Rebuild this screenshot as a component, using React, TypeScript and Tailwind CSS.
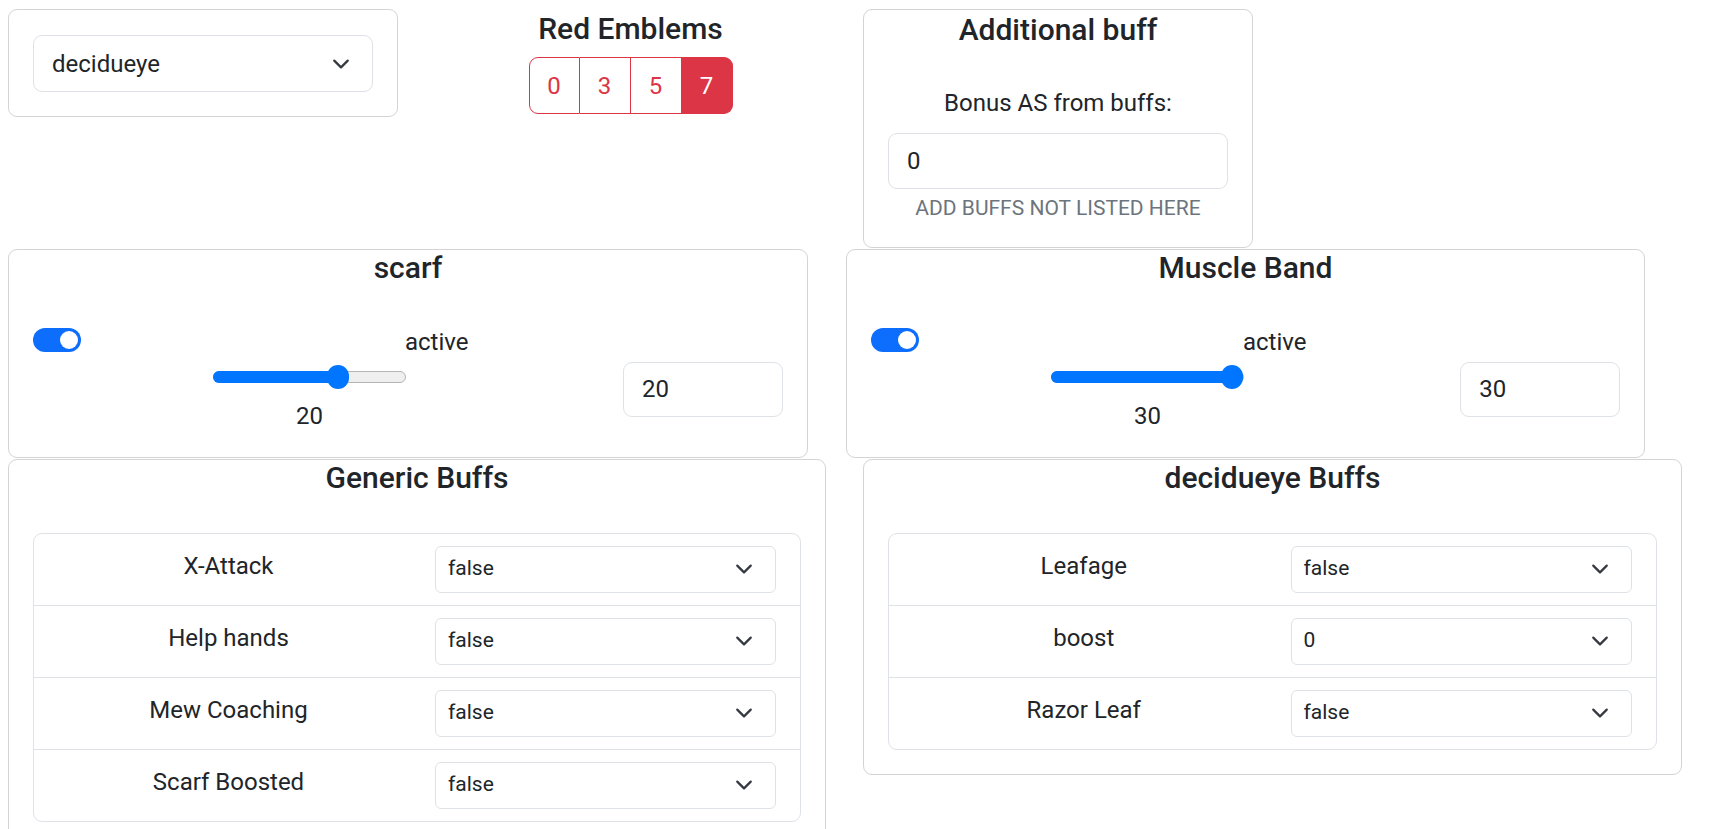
import { useState } from 'react';

type ItemCardProps = {
  title: string;
  value: number;
  max: number;
  widthClass: string;
  marginClass: string;
};

type BuffRow = {
  label: string;
  value: string;
};

const genericBuffs: BuffRow[] = [
  { label: 'X-Attack', value: 'false' },
  { label: 'Help hands', value: 'false' },
  { label: 'Mew Coaching', value: 'false' },
  { label: 'Scarf Boosted', value: 'false' },
];

const pokemonBuffs: BuffRow[] = [
  { label: 'Leafage', value: 'false' },
  { label: 'boost', value: '0' },
  { label: 'Razor Leaf', value: 'false' },
];

const emblems = [0, 3, 5, 7];

const Chevron = () => (
  <svg width="18" height="18" viewBox="0 0 16 16" fill="none">
    <path
      d="m2 5 6 6 6-6"
      stroke="#343a40"
      strokeWidth="2"
      strokeLinecap="round"
      strokeLinejoin="round"
    />
  </svg>
);

const Toggle = () => (
  <div className="relative mt-[6px] h-6 w-12 shrink-0 rounded-full bg-[#0d6efd]">
    <div className="absolute right-[3px] top-[3px] h-[18px] w-[18px] rounded-full bg-white" />
  </div>
);

const Slider = ({ value, max }: { value: number; max: number }) => {
  const pct = value / max;
  return (
    <div className="relative h-6 w-[193px]">
      <div className="absolute left-0 right-0 top-[6px] h-3 rounded-full border border-[#b5b5b5] bg-[#efefef]" />
      <div
        className="absolute left-0 top-[6px] h-3 rounded-full bg-[#0075ff]"
        style={{ width: `calc(${pct} * (100% - 24px) + 12px)` }}
      />
      <div
        className="absolute top-0 h-6 w-[22px] rounded-full bg-[#0075ff]"
        style={{ left: `calc(${pct} * (100% - 24px) + 1px)` }}
      />
    </div>
  );
};

const ItemCard = ({ title, value, max, widthClass, marginClass }: ItemCardProps) => (
  <div className={`${marginClass} ${widthClass} rounded-[9px] border border-[#d4d4d4]`}>
    <h5 className="text-center text-[30px] font-medium leading-[36px]">{title}</h5>
    <div className="flex items-start px-6 pb-[23px] pt-9">
      <div className="w-[590px]">
        <div className="flex h-9 items-start">
          <Toggle />
          <span className="ml-[324px] mt-[2px]">active</span>
        </div>
        <div className="ml-[180px] mt-[7px] w-[193px]">
          <Slider value={value} max={max} />
          <div className="mt-[9px] text-center">{value}</div>
        </div>
      </div>
      <div className="mt-10 flex h-[55px] w-[160px] items-center rounded-[9px] border border-[#dee2e6] pl-[18px]">
        {value}
      </div>
    </div>
  </div>
);

const BuffCard = ({
  title,
  rows,
  widthClass,
  marginClass,
}: {
  title: string;
  rows: BuffRow[];
  widthClass: string;
  marginClass: string;
}) => (
  <div className={`${marginClass} ${widthClass} self-start rounded-[9px] border border-[#d4d4d4]`}>
    <h5 className="mb-[13px] text-center text-[30px] font-medium leading-[36px]">{title}</h5>
    <div className="p-6">
      <div className="rounded-[9px] border border-[#dee2e6]">
        {rows.map((row, i) => (
          <div
            key={row.label}
            className={`grid grid-cols-2 gap-9 px-6 py-3 ${
              i < rows.length - 1 ? 'border-b border-[#dee2e6]' : ''
            }`}
          >
            <div className="mt-[2px] text-center leading-9">{row.label}</div>
            <div className="flex h-[47px] items-center justify-between rounded-[6px] border border-[#dee2e6] pl-3 pr-[22px] text-[21px]">
              <span>{row.value}</span>
              <Chevron />
            </div>
          </div>
        ))}
      </div>
    </div>
  </div>
);

export default function App() {
  const [emblem, setEmblem] = useState(7);

  return (
    <div className="min-h-screen bg-white font-['Roboto','Liberation_Sans',sans-serif] text-[24px] leading-[1.5] text-[#212529]">
      <div className="flex items-start pt-[9px]">
        <div className="ml-2 w-[390px] rounded-[9px] border border-[#d4d4d4] px-6 pb-6 pt-[25px]">
          <div className="flex h-[57px] items-center justify-between rounded-[9px] border border-[#dee2e6] pl-[18px] pr-[22px]">
            <span>decidueye</span>
            <Chevron />
          </div>
        </div>

        <div className="flex w-[465px] flex-col items-center">
          <h5 className="mt-[2px] text-[30px] font-medium leading-[36px]">Red Emblems</h5>
          <div className="mt-[10px] flex">
            {emblems.map((n, i) => (
              <button
                key={n}
                onClick={() => setEmblem(n)}
                className={`flex h-[57px] w-[51px] items-center justify-center border-y border-r border-[#dc3545] ${
                  i === 0 ? 'rounded-l-[9px] border-l' : ''
                } ${i === emblems.length - 1 ? 'rounded-r-[9px]' : ''} ${
                  emblem === n ? 'bg-[#dc3545] text-white' : 'text-[#dc3545]'
                }`}
              >
                {n}
              </button>
            ))}
          </div>
        </div>

        <div className="flex w-[390px] flex-col items-center rounded-[9px] border border-[#d4d4d4] px-6 pb-[22px]">
          <h5 className="mt-[2px] text-[30px] font-medium leading-[36px]">Additional buff</h5>
          <div className="mt-[37px]">Bonus AS from buffs:</div>
          <div className="mt-3 flex h-[56px] w-full items-center rounded-[9px] border border-[#dee2e6] pl-[18px]">
            0
          </div>
          <div className="mt-1 text-[21px] text-[#6c757d]">ADD BUFFS NOT LISTED HERE</div>
        </div>
      </div>

      <div className="mt-[1px] flex items-start">
        <ItemCard title="scarf" value={20} max={30} widthClass="w-[800px]" marginClass="ml-2" />
        <ItemCard title="Muscle Band" value={30} max={30} widthClass="w-[799px]" marginClass="ml-[38px]" />
      </div>

      <div className="mt-[1px] flex items-start">
        <BuffCard title="Generic Buffs" rows={genericBuffs} widthClass="w-[818px]" marginClass="ml-2" />
        <BuffCard title="decidueye Buffs" rows={pokemonBuffs} widthClass="w-[819px]" marginClass="ml-[37px]" />
      </div>
    </div>
  );
}
